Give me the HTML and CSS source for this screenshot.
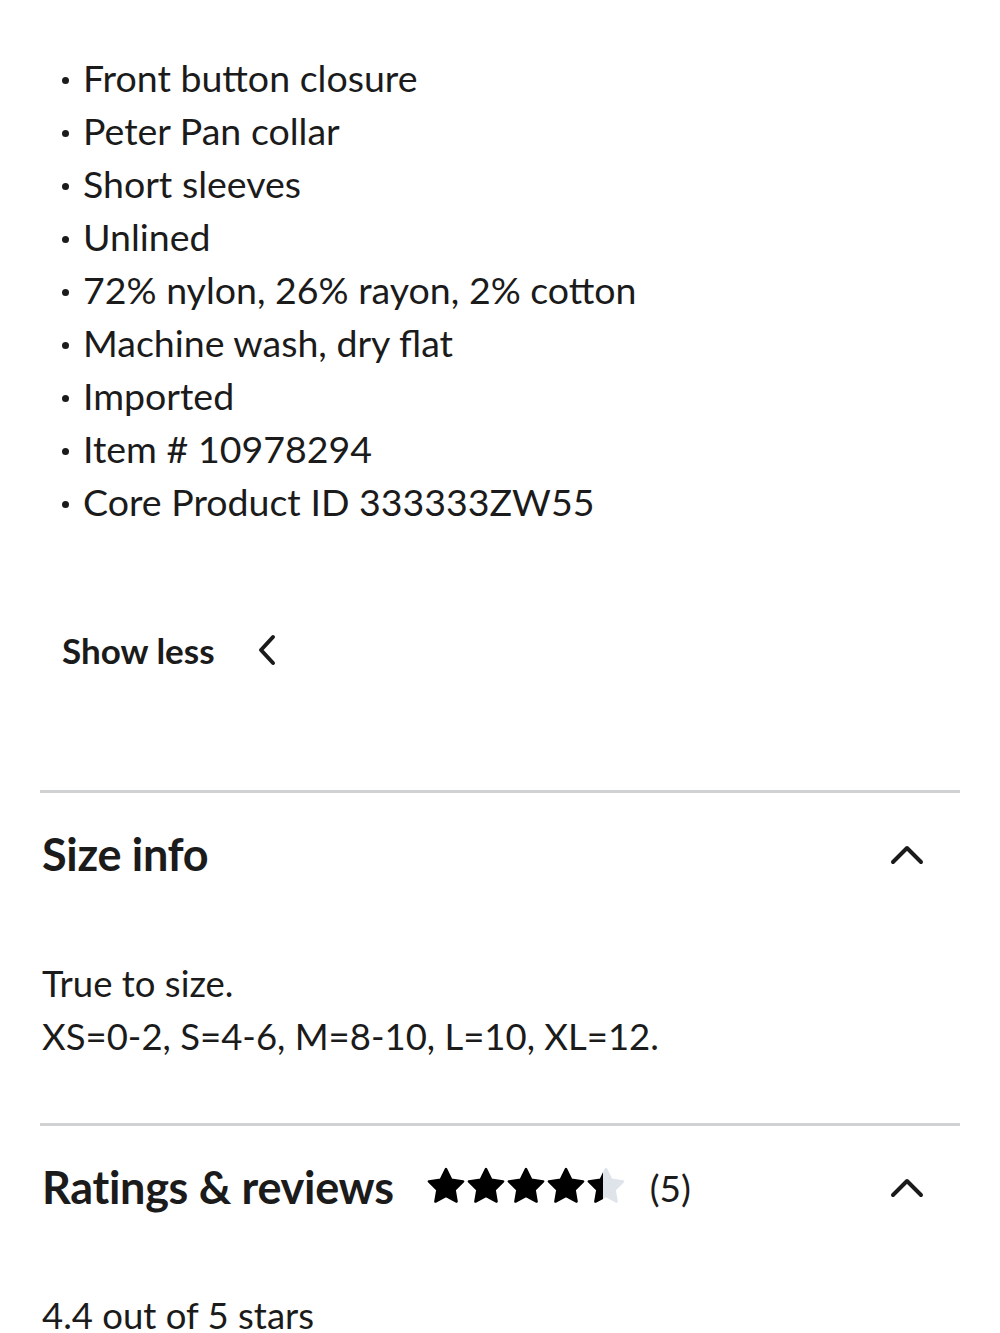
FILE: index.html
```html
<!DOCTYPE html>
<html lang="en">
<head>
<meta charset="utf-8">
<title>Product details</title>
<link rel="stylesheet" href="styles.css">
</head>
<body>
<main class="page">
  <ul class="features">
    <li>Front button closure</li>
    <li>Peter Pan collar</li>
    <li>Short sleeves</li>
    <li>Unlined</li>
    <li>72% nylon, 26% rayon, 2% cotton</li>
    <li>Machine wash, dry flat</li>
    <li>Imported</li>
    <li>Item # 10978294</li>
    <li>Core Product ID 333333ZW55</li>
  </ul>

  <button class="show-less" type="button">
    <span>Show less</span>
    <svg class="chev-left" viewBox="0 0 20 32" width="20" height="32" aria-hidden="true">
      <path d="M16 3 L4 16 L16 29" fill="none" stroke="#1b1b1b" stroke-width="4" stroke-linecap="round" stroke-linejoin="round"/>
    </svg>
  </button>

  <section class="section size-section">
    <header class="section-head">
      <h2 class="section-title">Size info</h2>
      <svg class="chev-up" viewBox="0 0 34 22" width="34" height="22" aria-hidden="true">
        <path d="M3 19 L17 5 L31 19" fill="none" stroke="#1b1b1b" stroke-width="4" stroke-linecap="round" stroke-linejoin="round"/>
      </svg>
    </header>
    <div class="size-body">
      <p>True to size.</p>
      <p>XS=0-2, S=4-6, M=8-10, L=10, XL=12.</p>
    </div>
  </section>

  <section class="section reviews-section">
    <header class="section-head">
      <div class="title-row">
        <h2 class="section-title">Ratings &amp; reviews</h2>
        <div class="stars" aria-label="4.4 out of 5 stars">
          <svg viewBox="0 0 200 40" width="200" height="40">
            <defs>
              <path id="star" d="M20 2 L25.29 12.72 L37.12 14.44 L28.56 22.78 L30.58 34.56 L20 29 L9.42 34.56 L11.44 22.78 L2.88 14.44 L14.71 12.72 Z" stroke-linejoin="round" stroke-width="2.5"/>
              <clipPath id="half" clipPathUnits="userSpaceOnUse"><rect x="160" y="0" width="17" height="40"/></clipPath>
            </defs>
            <use href="#star" x="0" fill="#000" stroke="#000"/>
            <use href="#star" x="40" fill="#000" stroke="#000"/>
            <use href="#star" x="80" fill="#000" stroke="#000"/>
            <use href="#star" x="120" fill="#000" stroke="#000"/>
            <use href="#star" x="160" fill="#dfe4ea" stroke="#dfe4ea"/>
            <g clip-path="url(#half)">
              <use href="#star" x="160" fill="#000" stroke="#000"/>
            </g>
          </svg>
        </div>
        <span class="count">(5)</span>
      </div>
      <svg class="chev-up" viewBox="0 0 34 22" width="34" height="22" aria-hidden="true">
        <path d="M3 19 L17 5 L31 19" fill="none" stroke="#1b1b1b" stroke-width="4" stroke-linecap="round" stroke-linejoin="round"/>
      </svg>
    </header>
    <p class="avg">4.4 out of 5 stars</p>
  </section>
</main>
</body>
</html>
```

FILE: styles.css
```css
* { box-sizing: border-box; }

html, body {
  margin: 0;
  padding: 0;
  background: #fff;
}

body {
  font-family: Lato, "Open Sans", "Liberation Sans", sans-serif;
  color: #1b1b1b;
  overflow: hidden;
}

.page {
  padding: 51px 40px 0 40px;
}

.features {
  list-style: none;
  margin: 0;
  padding: 0 0 0 22px;
}

.features li {
  font-size: 37.5px;
  line-height: 53px;
  display: flex;
  align-items: center;
  gap: 14px;
}

.features li::before {
  content: "";
  width: 7px;
  height: 7px;
  border-radius: 50%;
  background: #1b1b1b;
  flex: none;
  margin-top: 6px;
}

.show-less {
  display: flex;
  align-items: center;
  gap: 42px;
  margin: 102px 0 0 22px;
  padding: 0;
  border: 0;
  background: none;
  font-family: inherit;
  font-size: 35px;
  font-weight: 700;
  color: #1b1b1b;
  line-height: 40px;
  height: 40px;
}

.chev-left { display: block; }

.section {
  border-top: 3px solid #cfd1d3;
}

.size-section { margin-top: 120px; }

.section-head {
  display: flex;
  align-items: center;
  justify-content: space-between;
  padding: 0 36px 0 2px;
  height: 122px;
}

.section-title {
  margin: 0;
  font-size: 45px;
  font-weight: 700;
  letter-spacing: -0.3px;
}

.size-body {
  padding: 42px 2px 60px;
}

.size-body p {
  margin: 0;
  font-size: 36.5px;
  line-height: 53px;
}

.title-row {
  display: flex;
  align-items: center;
}

.stars {
  display: flex;
  margin-left: 32px;
}

.stars svg { display: block; }

.count {
  font-size: 37px;
  margin-left: 24px;
}

.avg {
  margin: 50px 0 0 2px;
  font-size: 36.5px;
  line-height: 34px;
}
```
